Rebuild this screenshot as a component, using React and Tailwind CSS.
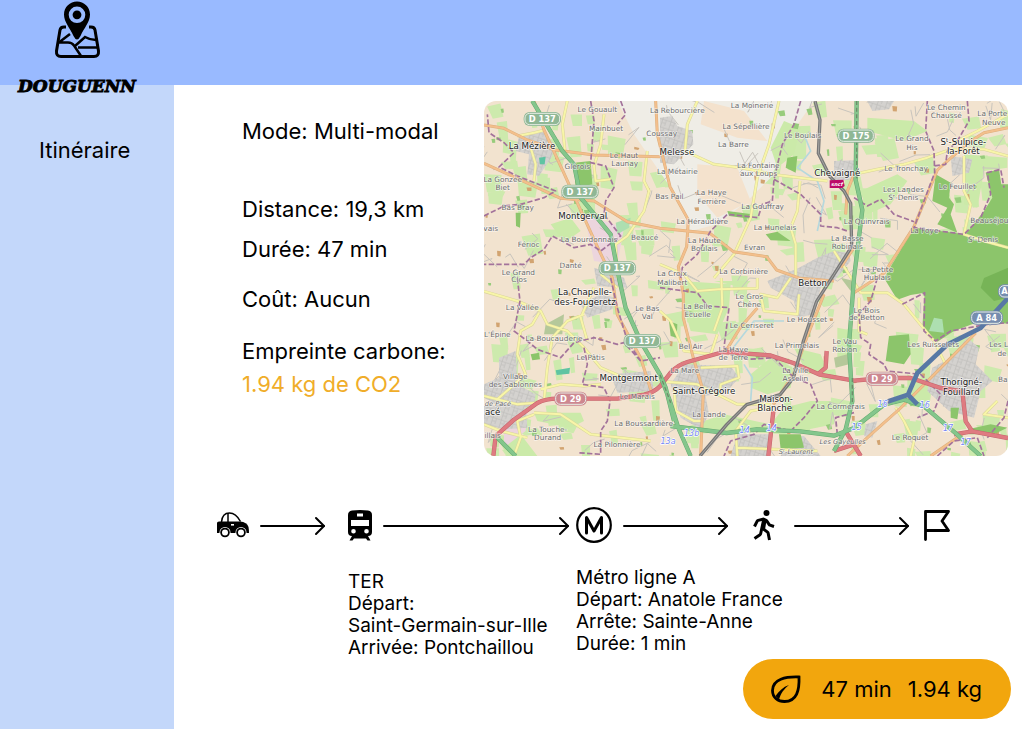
import { BiWalk } from 'react-icons/bi'

// [label, x, y] - map units, 3 per pixel
const villages = [
  ['Le Gouault', 340, 34], ['Mainbuet', 366, 90], ['Le Haut', 420, 170], ['Launay', 422, 194],
  ['Glérois', 280, 204], ['La Gonzée', 56, 243], ['Biet', 56, 268], ['Bas Bray', 101, 326],
  ['vais', 20, 389], ['Férioc', 134, 437], ['La Bourdonnais', 315, 424], ['Beaucé', 482, 417],
  ['Danté', 260, 502], ['Le Grand', 103, 521], ['Clos', 105, 544], ['La Rebourcière', 580, 37],
  ['Coussay', 533, 104], ['La Moinerie', 804, 20], ['La Sépellière', 786, 85],
  ['La Barre', 748, 139], ['Le Boulais', 956, 112], ['La Métairie', 580, 218],
  ['La Fontaine', 823, 201], ['aux Loups', 824, 225], ['La Haye', 683, 283],
  ['Ferrière', 683, 308], ['Bas Pail', 556, 295], ['La Gouffray', 836, 323],
  ['La Héraudière', 655, 369], ['La Hunelais', 873, 387], ['La Haute', 661, 425],
  ['Boulais', 661, 449], ['Evran', 812, 446], ['La Corbinière', 779, 520],
  ['La Croix', 564, 526], ['Malibert', 565, 551], ['Le Chemin', 1387, 26],
  ['Chaussé', 1387, 50], ['La Porte', 1525, 46], ['Neuve', 1529, 71], ['Le Grand', 1284, 121],
  ['His', 1284, 146], ['Le Tronchay', 1266, 211], ['Les Landes', 1258, 273],
  ['Sᵗ-Denis', 1258, 297], ['Le Feuillet', 1420, 265], ['La Quinvrais', 1148, 369],
  ['Beauséjou', 1516, 366], ['La Foye', 1321, 397], ['Sᵗ-Denis', 1497, 424],
  ['La Basse', 1090, 421], ['Robinais', 1090, 445], ['La Petite', 1180, 513],
  ['Hublais', 1180, 538], ['La Vallée', 115, 628], ["L'Épine", 40, 709],
  ['La Boucauderie', 210, 720], ['Le Bas', 490, 631], ['Val', 490, 655], ['Le Pâtis', 320, 778],
  ['Village', 94, 835], ['des Sablonnes', 94, 859], ['Le Marais', 460, 895],
  ['La Touche-', 191, 994], ['Durand', 191, 1018], ['La Boussardière', 479, 974],
  ['La Pilonnière', 399, 1039], ['illais', 26, 1011], ['La Belle', 641, 624],
  ['Ecuelle', 641, 648], ['Le Gros', 796, 594], ['Chêne', 796, 618], ['Le Ceriseret', 803, 682],
  ['Le Housset', 969, 663], ['La Primelais', 939, 741], ['Bel Air', 620, 744],
  ['La Haye', 748, 752], ['de Terre', 748, 776], ['La Mare', 602, 816],
  ['La Ville', 934, 816], ['Asselin', 934, 841], ['La Lande', 675, 947],
  ['Le Bois', 1148, 635], ['de Betton', 1148, 658], ['Le Vau', 1082, 728],
  ['Robion', 1082, 752], ['Les Ruisselets', 1348, 739], ['Les L', 1544, 739],
  ['de', 1554, 764], ['La Cormerais', 1070, 923], ['Le Roquet', 1278, 1018], ['Ba', 1556, 842],
]

const towns = [
  ['La Mézière', 144, 144], ['Montgerval', 296, 354], ['Melesse', 579, 162],
  ['Chevaigné', 1060, 225], ['Sᵗ-Sulpice-', 1438, 131], ['la-Forêt', 1438, 160],
  ['La Chapelle-', 303, 583], ['des-Fougeretz', 303, 611], ['Montgermont', 434, 841],
  ['acé', 26, 942], ['Betton', 986, 556], ['Saint-Grégoire', 660, 880],
  ['Maison-', 876, 903], ['Blanche', 872, 930], ['Thorigné-', 1432, 852], ['Fouillard', 1432, 881],
]

const shields = [
  ['D 137', 175, 54, '#8fb795'], ['D 137', 288, 272, '#8fb795'], ['D 137', 400, 502, '#8fb795'],
  ['D 137', 475, 720, '#8fb795'], ['D 175', 1116, 104, '#8fb795'], ['D 29', 260, 893, '#cd8790'],
  ['D 29', 1194, 833, '#cd8790'], ['A 84', 1508, 650, '#768daf'],
]

const exits = [
  ['13b', 623, 1004], ['13a', 552, 1030], ['14', 782, 996], ['14', 863, 990],
  ['16', 1196, 918], ['16', 1322, 921], ['15', 1118, 988], ['17', 1392, 991], ['17', 1445, 1032],
]

const places = [['de Pacé', 42, 915], ['Les Gayeulles', 1076, 1029], ['Sᵗ-Laurent', 936, 1060]]

// built-up areas
const built = [
  'M105 105L175 90 210 130 205 165 165 225 130 220 135 160 95 150Z',
  'M528 50L565 45 580 75 625 90 628 130 570 190 528 185Z',
  'M1150 0L1230 0 1215 25 1165 30Z',
  'M1050 180L1110 178 1112 235 1050 240Z',
  'M1400 165L1465 175 1455 215 1405 225Z',
  'M945 500L1000 470 1050 450 1095 455 1100 480 1050 540 1010 560 990 640 940 650 930 600 860 560 850 540 900 520Z',
  'M290 610L350 580 395 590 385 625 310 650Z',
  'M45 770L95 750 100 850 155 880 150 915 60 925 0 890 0 850 45 830Z',
  'M0 915L125 910 130 980 60 985 0 970Z',
  'M380 820L500 810 510 870 400 875Z',
  'M560 850L600 790 740 795 765 830 730 870 665 885 675 940 650 985 590 950Z',
  'M1400 770L1450 710 1485 740 1475 790 1525 840 1490 870 1470 950 1395 930 1330 870 1345 800Z',
  'M330 500L420 530 430 560 340 555Z', 'M1145 970L1180 960 1165 1010 1140 1005Z',
  'M760 1000L860 1000 850 1065 740 1065ZM900 1010L960 1005 1010 1065 890 1065Z',
]

const woods = [
  'M270 185L320 180 325 250 275 262Z', 'M1200 531L1290 380 1445 400 1500 330 1525 290 1505 215 1545 205 1552 250 1572 250 1572 668 1490 660 1410 690 1360 722 1315 680 1322 575 1280 582 1240 596Z',
  'M1355 220L1400 245 1395 290 1410 310 1400 340 1420 395 1360 370 1390 320 1345 300Z',
  'M1215 705L1275 700 1280 760 1260 790 1205 780Z', 'M140 760L165 755 168 775 145 778Z',
  'M95 335L110 335 108 380 96 375Z', 'M845 400L880 392 920 420 860 418Z',
  'M730 330L805 340 800 353 735 345Z', 'M910 170L940 165 935 215 905 200Z',
  'M1452 985L1520 970 1570 980 1530 1000 1455 1000Z', 'M1400 920L1425 920 1420 955 1400 950Z',
  'M555 660L580 670 578 710 560 705Z', 'M885 1000L950 1000 960 1040 890 1045Z',
]

const meadows = [
  'M590 540L740 550 735 620 700 700 620 690 600 620Z', 'M800 820L860 770 930 800 920 860 850 880 800 860Z',
  'M930 740L1010 760 1030 810 970 820Z', 'M860 140L900 60 950 80 930 160 880 200Z',
  'M200 370L260 350 290 390 240 425Z', 'M690 540L800 540 780 560Z', 'M150 935L290 935 300 960 260 980 160 960Z',
  'M1130 270L1240 220 1270 240 1220 310 1150 340Z', 'M1060 680L1110 690 1100 790 1060 780Z',
  'M600 980L720 940 860 970 900 920 980 900 1050 900 1050 970 900 1000Z',
  'M40 1010L110 1000 160 1065 70 1065Z', 'M1270 820L1340 860 1330 930 1270 900Z',
  'M1150 50L1290 60 1330 90 1260 120 1150 90Z', 'M1440 160L1570 170 1570 200 1500 210 1480 320 1440 310Z',
]

const yellowRoads = [
  'M250 0L235 70 243 150M360 40L350 130 330 195 335 240 380 235M490 150L480 240 495 270 480 330 430 405 395 430 400 530',
  'M100 105L150 95 180 88M150 240L155 190 140 140',
  'M640 0L610 70 603 150 690 190 770 200 880 222 960 232 1030 240M885 0L855 130 820 230 800 350 750 460 690 531',
  'M948 240L940 330 920 380 935 430 935 531M528 490L600 520 640 570 705 565 820 562 820 531',
  'M1110 220L1180 205 1260 190 1330 170 1400 145 1500 145 1572 165M1440 165L1440 270 1460 310 1440 400 1500 420 1572 440',
  'M1400 130L1480 90 1572 40M1050 450L1130 575 1210 575 1260 610 1350 720 1385 790',
  'M0 571L100 600 170 630 190 670 250 690 300 740 350 800 420 830M165 635L145 670 110 690 100 760 125 820 40 895',
  'M330 560L290 650 310 720M350 520L400 560M180 900L190 800 205 710 250 660 300 640M0 885L100 910 160 905M150 935L230 940 290 980 320 1000 500 1020',
  'M150 940L100 960 110 1010 90 1065M170 865L230 850 300 855 350 850M528 630L560 660 600 750 680 760 700 700',
  'M712 531L715 620 690 690M528 841L640 850 760 910 860 910M650 800L760 795 765 830 710 850 708 870M570 860L575 930 630 960 655 960',
  'M760 1065L755 990 800 930 860 920M760 1040L1000 1050M920 531L880 590 830 580 840 630 940 640 945 580',
  'M1125 590L1125 690 1150 700M1235 920L1260 960 1290 1020 1280 1065M1540 900L1500 940 1572 950M0 970L50 990 130 1010',
]

const orangeRoads = [
  'M0 72L60 82 130 117 215 147 330 162 528 167', 'M150 0L180 87 240 217 285 317 340 437 385 531 400 641 470 771 505 881',
  'M0 187L100 232 230 292 330 300 430 362 528 382 678 397 748 452 848 467 878 507 948 532 1050 540',
  'M515 0L520 100 558 257 613 357 608 437 583 497 598 580 598 651 628 771 658 871 650 1065',
  'M1572 80L1500 95 1450 127 1360 207 1290 377 1200 517 1110 575', 'M1475 696L1380 791 1250 921 1160 1001 1090 1065',
  'M820 621L768 681 728 746', 'M1020 580L968 711 928 821 868 911', 'M1340 1065L1440 996', 'M1085 340L1090 270 1110 220M1110 440L1070 500',
]

const borders = [
  'M0 345L60 315 110 310 180 290 215 270 100 225 45 198 90 155 60 125 15 95 10 40',
  'M320 0L330 60 320 185 365 195 390 260 365 300 360 340 410 405 350 450 320 430 270 440 205 405 180 445 140 470 120 490 0 490',
  'M410 0L425 40 400 70', 'M950 0L930 70 895 130 870 235 865 300 835 310 822 350 730 340 680 390 640 460 595 500 590 531',
  'M870 235L950 280 1010 340 1010 375 1060 380 1090 390', 'M1330 0L1325 90 1350 150 1352 215 1290 380 1440 400 1490 350 1520 280 1510 215 1550 205 1560 260',
  'M1450 0L1455 60 1420 120 1390 150 1385 190 1350 195', 'M1110 290L1150 315 1190 295 1230 340 1290 362',
  'M100 531L108 600 90 690 130 720 160 745 230 770 270 725 330 710 400 730 420 725 470 780 528 770',
  'M380 531L400 620 430 720 470 780', 'M300 740L310 790 295 850 360 860 378 900 370 960 350 990 350 1060 280 1055',
  'M528 560L640 575 670 615 735 620 720 740 790 775 870 770 930 830 980 850 1000 900 960 950 920 990 840 970 810 1000 740 1020 720 1065',
  'M1180 531L1160 600 1125 640 1130 710 1160 730 1155 760 1200 790 1210 810 1310 820 1370 880 1350 930 1300 950',
  'M1255 610L1322 575 1320 690 1355 720 1400 690 1510 670 1572 665', 'M1572 900L1560 950 1510 1010M1360 1065L1410 1020 1480 1010 1500 1065M1060 1000L1055 950 1110 935',
]

const trunkRoads = [
  'M145 0L235 150 270 190 290 290 380 400 405 531 425 621 470 721 528 821 558 901 583 981 620 1065',
  'M560 975L728 996 818 985 948 991 1050 1004 1110 981 1200 911 1260 896 1320 916 1420 1001 1490 1065',
  'M1118 0L1115 237 1135 327 1110 531 1095 731 1105 901 1085 985 1050 1050', 'M528 821L545 860 570 960',
  'M40 1010L95 1065',
]

const redRoads = [
  'M28 1065L35 1005 90 956 160 906Q185 893 220 893L400 893 480 881Q510 875 528 856L560 815Q580 792 610 783L718 753 858 763 928 786 1008 821 1110 839 1200 831 1280 831 1370 861 1435 871 1445 961 1465 991 1572 1011',
  'M868 931L853 1065', 'M1085 991L1130 1065M1050 1050L1110 1030', 'M1465 991L1410 1000', 'M1028 750L1025 800 1000 821',
]

const rails = [
  'M993 0L1008 57 1003 157 1038 227 1080 270 1100 307 1103 437 1050 520 998 601 958 721 928 831 888 881 788 911 728 971 648 1065',
]

// small fields and lanes that fill the countryside, always the same ones
function scatter(count, seed, draw) {
  let s = seed
  const rnd = () => {
    s = (s * 16807) % 2147483647
    return s / 2147483647
  }
  return Array.from({ length: count }, () => draw(rnd))
}

const field = (min, max) => (rnd) => {
  const x = rnd() * 1572
  const y = rnd() * 1065
  const w = min + rnd() * (max - min)
  const h = min + rnd() * (max - min)
  const k = (rnd() - 0.5) * w
  return `M${x} ${y}l${w} ${k / 2}l${-k / 2} ${h}l${-w * 0.8} ${-k / 3}Z`
}

const lane = (rnd) => {
  const x = rnd() * 1572
  const y = rnd() * 1065
  const step = () => (rnd() - 0.5) * 110
  return `M${x} ${y}l${step()} ${step()}l${step()} ${step()}`
}

const fields = scatter(300, 4211, field(14, 62)).join('')
const groves = scatter(75, 977, field(6, 20)).join('')
const farms = scatter(60, 3181, field(6, 16)).join('')
const lanes = scatter(150, 77, lane).join('')

function RouteMap() {
  return (
    <svg
      viewBox="0 0 1572 1065"
      preserveAspectRatio="xMidYMid slice"
      role="img"
      aria-label="Carte"
      className="block h-auto w-full rounded-xl"
    >
      <defs>
        <pattern id="streets" width="26" height="24" patternUnits="userSpaceOnUse" patternTransform="rotate(18)">
          <rect width="26" height="24" fill="#d4d2cf" />
          <path d="M0 6H26M7 0V24M18 6V24M7 16H18" stroke="#bebcba" strokeWidth="2" fill="none" />
        </pattern>
      </defs>
      <rect width="1572" height="1065" fill="#f2e3cf" />
      <path d={fields} fill="#cdeaad" />
      <path d="M400 0H990L920 100 860 230 790 300 700 370 620 390 560 260 450 100Z" fill="#efede6" />
      <path d="M660 0L780 30 850 120 760 110 650 70ZM640 190L760 200 800 300 700 350 640 280Z" fill="#f4e2cd" />
      <path d={meadows.join('')} fill="#cbeaa9" />
      <path d={farms} fill="#d2a471" />
      <path d={groves} fill="#97cc7c" />
      <path d="M300 340L420 380 400 490 330 480ZM60 930L130 935 125 990 60 1040Z" fill="#ecd5de" />
      <path d="M1070 530L1110 540 1100 570ZM1050 770L1090 760 1095 790 1055 800ZM185 670L240 640 235 700 180 700Z" fill="#b5c89a" />
      <path d={lanes} fill="none" stroke="#c8c4bd" strokeWidth="3" />
      {built.map((d) => <path key={d} d={d} fill="url(#streets)" />)}
      <path d={woods.join('')} fill="#8cc56b" />
      <path d="M1500 531L1572 500 1572 590 1530 600 1490 560Z" fill="#77b457" />
      <path d="M1350 650L1375 655 1380 695 1335 690ZM395 365L440 350 435 380 400 400Z" fill="#addfb0" />
      <path d="M215 808L258 800 256 818 218 822ZM165 170L185 167 182 190 168 190Z" fill="#5fc4a2" />
      <g fill="none" strokeLinejoin="round">
        <path d="M960 100L980 150 940 200 1000 240 1020 300 1000 390M780 790L805 830 800 900M740 750L810 660 900 660" stroke="#b5d8dd" strokeWidth="5" />
        <path d={yellowRoads.join('')} stroke="#d8d49a" strokeWidth="9" />
        <path d={yellowRoads.join('')} stroke="#f8f5a8" strokeWidth="6" />
        <path d={orangeRoads.join('')} stroke="#dcae7c" strokeWidth="9" />
        <path d={orangeRoads.join('')} stroke="#f3bf8c" strokeWidth="6" />
        <path d={borders.join('')} stroke="#a3739b" strokeWidth="5" strokeDasharray="16 7" />
        <path d={redRoads.join('')} stroke="#c4656c" strokeWidth="13" />
        <path d={redRoads.join('')} stroke="#df7b81" strokeWidth="10" />
        <path d={trunkRoads.join('')} stroke="#65a970" strokeWidth="13" />
        <path d={trunkRoads.join('')} stroke="#84c68c" strokeWidth="10" />
        <path d="M1118 0V237M1105 831V931M528 821L560 905" stroke="#6e8b69" strokeWidth="4" strokeDasharray="12 8" />
        <path d="M1572 591L1490 681 1390 731 1300 816 1272 881 1300 910M1272 881L1200 905" stroke="#5878a5" strokeWidth="14" />
        <path d={rails.join('')} stroke="#777777" strokeWidth="10" />
        <path d={rails.join('')} stroke="#a5a5a2" strokeWidth="3" />
      </g>
      <g fontFamily="DejaVu Sans, sans-serif" textAnchor="middle" paintOrder="stroke" strokeLinejoin="round">
        <g fontSize="22" fill="#6b6b6b" stroke="#ffffff" strokeOpacity="0.6" strokeWidth="4">
          {villages.map(([name, x, y]) => <text key={`${name}${x}`} x={x} y={y}>{name}</text>)}
        </g>
        <g fontSize="26" fill="#1c1c1c" stroke="#ffffff" strokeOpacity="0.7" strokeWidth="5">
          {towns.map(([name, x, y]) => <text key={name} x={x} y={y}>{name}</text>)}
        </g>
        <g fontSize="24" fontStyle="italic" fill="#7788f5" stroke="#ffffff" strokeWidth="4">
          {exits.map(([name, x, y]) => <text key={`${name}${x}`} x={x} y={y}>{name}</text>)}
        </g>
        <g fontSize="20" fontStyle="italic" fill="#6b6b6b" stroke="#ffffff" strokeOpacity="0.6" strokeWidth="4">
          {places.map(([name, x, y]) => <text key={name} x={x} y={y}>{name}</text>)}
        </g>
      </g>
      {shields.map(([name, x, y, color]) => {
        const w = name.length * 14 + 42
        return (
          <g key={`${name}${x}`}>
            <rect x={x - w / 2} y={y - 21} width={w} height="42" rx="18" fill={color} />
            <rect x={x - w / 2 + 4} y={y - 17} width={w - 8} height="34" rx="14" fill="none" stroke="#e6ede5" strokeWidth="3" />
            <text x={x} y={y + 9} fontSize="25" fontWeight="700" fontFamily="DejaVu Sans, sans-serif" textAnchor="middle" fill="#ffffff">{name}</text>
          </g>
        )
      })}
      {/* A 84 shield cut by the right edge */}
      <rect x="1542" y="550" width="98" height="42" rx="18" fill="#768daf" />
      <rect x="1546" y="554" width="90" height="34" rx="14" fill="none" stroke="#e6ede5" strokeWidth="3" />
      <text x="1552" y="580" fontSize="25" fontWeight="700" fontFamily="DejaVu Sans, sans-serif" fill="#ffffff">A</text>
      <path d="M1037 238L1078 236 1082 255 1074 261H1037Z" fill="#bd0b68" />
      <text x="1059" y="256" fontSize="15" fontWeight="700" fontStyle="italic" fontFamily="DejaVu Sans, sans-serif" textAnchor="middle" fill="#ffffff">sncf</text>
    </svg>
  )
}

function LogoIcon() {
  return (
    <svg viewBox="0 0 48 58" className="h-[58px] w-12" fill="none" aria-hidden="true">
      <path d="M13 27H11Q7.500 27 7 30L3.500 51Q3 56.500 8 56.500H41Q46 56.500 45.500 51L42 30Q41.500 27 38 27H36" stroke="#000" strokeWidth="3" />
      <path d="M6 42.500H15Q19 42.500 21 45.500L28 56M6.500 42L17 34M22 46L32 37Q37 40 43 40M25 47.500H45" stroke="#000" strokeWidth="2.500" />
      <path
        d="M24 1.500C17 1.500 11 7 11 14.500C11 22 17 28 20.500 36Q24 43 27.500 36C31 28 37 22 37 14.500C37 7 31 1.500 24 1.500ZM24 6.500A8.300 8.300 0 1 1 24 23.100A8.300 8.300 0 1 1 24 6.500Z"
        fill="#000"
        fillRule="evenodd"
      />
      <circle cx="24" cy="14.800" r="4.400" fill="#000" />
    </svg>
  )
}

function CarIcon() {
  return (
    <svg viewBox="0 0 32 26" className="h-[26px] w-8 shrink-0" aria-hidden="true">
      <path d="M4.500 10C5 4 7.500 1 12.500 1C17.500 1 20.500 4 23.500 9.500" fill="none" stroke="#000" strokeWidth="1.500" />
      <path d="M11 1V10" stroke="#000" strokeWidth="1.500" />
      <path d="M0 11Q0 9.500 2 9.500H23Q30 10 31.500 15Q32 18 32 21H0Z" />
      <rect x="14" y="12" width="3" height="1.600" fill="#fff" />
      <circle cx="8" cy="20.500" r="5.500" fill="#fff" />
      <circle cx="24" cy="20.500" r="5.500" fill="#fff" />
      <circle cx="8" cy="20.500" r="3.900" fill="#fff" stroke="#000" strokeWidth="1.800" />
      <circle cx="24" cy="20.500" r="3.900" fill="#fff" stroke="#000" strokeWidth="1.800" />
    </svg>
  )
}

function TrainIcon() {
  return (
    <svg viewBox="0 0 24 31" className="h-[31px] w-6 shrink-0" aria-hidden="true">
      <path
        fillRule="evenodd"
        d="M4 .5Q12-.5 20 .5Q24 1 24 5V22Q24 26 20 26L22.500 30.500H19.500L18 28.500H6L4.500 30.500H1.500L4 26Q0 26 0 22V5Q0 1 4 .5ZM9 3.500V6.500H15V3.500ZM3 10V16H21V10ZM5.500 19A2.300 2.300 0 1 0 5.500 23.600A2.300 2.300 0 1 0 5.500 19ZM18.500 19A2.300 2.300 0 1 0 18.500 23.600A2.300 2.300 0 1 0 18.500 19Z"
      />
    </svg>
  )
}

function MetroIcon() {
  return (
    <svg viewBox="0 0 36 36" className="size-9 shrink-0" fill="none" stroke="#000" aria-hidden="true">
      <circle cx="18" cy="18" r="16.800" strokeWidth="2.200" />
      <path d="M10.500 26V10.500L18 24L25.500 10.500V26" strokeWidth="3" strokeLinecap="round" strokeLinejoin="round" />
    </svg>
  )
}

function FlagIcon() {
  return (
    <svg viewBox="0 0 26 31" className="h-[31px] w-[26px] shrink-0" fill="none" stroke="#000" strokeWidth="2.800" strokeLinecap="round" strokeLinejoin="round" aria-hidden="true">
      <path d="M1.500 29.500V1.500H24.500L18 11L24.500 20.500H1.500" />
    </svg>
  )
}

function LeafIcon() {
  return (
    <svg viewBox="0 0 30 28" className="h-7 w-[30px] shrink-0" aria-hidden="true">
      <path d="M28 2C15 1.500 1.500 4 1.500 15.500C1.500 22.500 7 26.500 13.500 26.500C26 26.500 28.500 15 28 2Z" fill="none" stroke="#000" strokeWidth="2.800" />
      <path d="M4.500 21C8 16 12 12 18 10C13 14 10 18 8 24.500Z" />
    </svg>
  )
}

function Arrow() {
  return (
    <svg className="h-5 w-0 min-w-0 flex-1 overflow-visible" fill="none" stroke="#000" strokeWidth="2" strokeLinecap="round" strokeLinejoin="round" aria-hidden="true">
      <line x1="0" y1="11" x2="100%" y2="11" />
      <svg x="100%" overflow="visible">
        <path d="M-8 3L0 11L-8 19" />
      </svg>
    </svg>
  )
}

function Step({ icon, last, className, children }) {
  return (
    <li className="min-w-0">
      <div className={`flex h-9 items-center gap-3 ${className || ''}`}>
        {icon}
        {!last && <Arrow />}
      </div>
      {children}
    </li>
  )
}

export default function App() {
  return (
    <div className="flex min-h-screen flex-col bg-white font-['Inter',sans-serif] text-[22px] leading-7 text-black">
      <header className="h-[85px] bg-[#99baff]">
        <div className="relative flex w-[154px] flex-col items-center gap-4">
          <LogoIcon />
          <span className="font-['DejaVu_Serif',serif] text-[17px] leading-6 font-bold italic [-webkit-text-stroke:1px_black]">
            DOUGUENN
          </span>
        </div>
      </header>

      <div className="flex flex-1">
        <nav className="w-[174px] shrink-0 bg-[#c3d7fa] pt-[51px] pl-[39px]">
          <a href="#itineraire">Itinéraire</a>
        </nav>

        <main className="flex min-w-0 flex-1 flex-col">
          <div className="flex pt-4 pr-[14px] pl-[68px]">
            <div className="w-[242px] shrink-0 whitespace-nowrap">
              <p className="mt-4">Mode: Multi-modal</p>
              <p className="mt-[50px]">Distance: 19,3 km</p>
              <p className="mt-3">Durée: 47 min</p>
              <p className="mt-[22px]">Coût: Aucun</p>
              <p className="mt-6">Empreinte carbone:</p>
              <p className="mt-[5px] text-[#f0ad29]">1.94 kg de CO2</p>
            </div>
            <div className="min-w-0 flex-1">
              <RouteMap />
            </div>
          </div>

          <ol className="mt-[51px] mr-[72px] ml-[43px] grid grid-cols-[131fr_228fr_171fr_177fr_26px]">
            <Step icon={<CarIcon />} className="pr-6" />
            <Step icon={<TrainIcon />} className="pr-2">
              <p className="mt-7 text-[19px] leading-[22px] whitespace-nowrap">
                TER<br />Départ:<br />Saint-Germain-sur-Ille<br />Arrivée: Pontchaillou
              </p>
            </Step>
            <Step icon={<MetroIcon />} className="pr-5">
              <p className="mt-6 text-[19px] leading-[22px] whitespace-nowrap">
                Métro ligne A<br />Départ: Anatole France<br />Arrête: Sainte-Anne<br />Durée: 1 min
              </p>
            </Step>
            <Step icon={<BiWalk className="size-9 shrink-0" />} className="pr-4" />
            <Step icon={<FlagIcon />} last />
          </ol>

          <button
            type="button"
            className="mt-auto mr-[11px] mb-[11px] flex h-[60px] items-center self-end rounded-full bg-[#f2a60d] pr-[29px] pl-7"
          >
            <LeafIcon />
            <span className="ml-5">47 min</span>
            <span className="ml-4">1.94 kg</span>
          </button>
        </main>
      </div>
    </div>
  )
}
